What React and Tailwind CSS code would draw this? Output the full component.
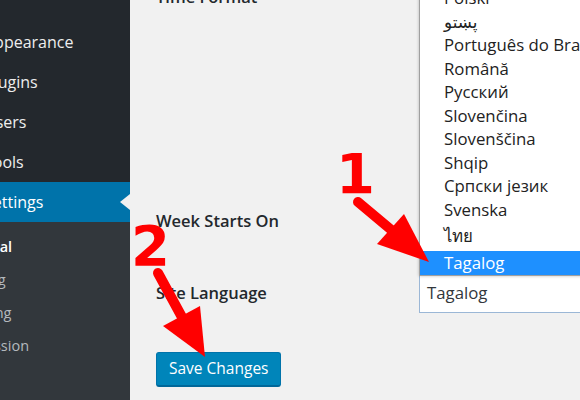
import React from 'react';

const menuItems = ['Appearance', 'Plugins', 'Users', 'Tools'];
const subItems = ['Writing', 'Reading', 'Discussion'];

const languages = [
  { name: 'Polski', h: 'h-[23.5px]' },
  { name: 'پښتو', h: 'h-[23.5px]' },
  { name: 'Português do Brasil', h: 'h-[23.5px]' },
  { name: 'Română', h: 'h-[23.5px]' },
  { name: 'Русский', h: 'h-[23.5px]' },
  { name: 'Slovenčina', h: 'h-[23.5px]' },
  { name: 'Slovenščina', h: 'h-[23.5px]' },
  { name: 'Shqip', h: 'h-[23.5px]' },
  { name: 'Српски језик', h: 'h-[23.5px]' },
  { name: 'Svenska', h: 'h-[23.5px]' },
  { name: 'ไทย', h: 'h-[30px]' },
];

const font = "font-['Open_Sans','Noto_Sans','DejaVu_Sans',sans-serif]";

const App = () => {
  return (
    <div className={`relative w-[580px] h-[400px] flex overflow-hidden ${font}`}>
      {/* Admin menu */}
      <aside className="w-[130px] shrink-0 bg-[#23282d] flex flex-col">
        <div className="h-[22px] shrink-0" />
        {menuItems.map((item) => (
          <div key={item} className="h-[40px] shrink-0 flex items-center overflow-hidden text-[16px] leading-[22px] pb-[1px] text-[#eeeeee] whitespace-nowrap">
            <span className="-ml-[16px]">{item}</span>
          </div>
        ))}
        <div className="relative h-[40px] shrink-0 flex items-center bg-[#0073aa] text-[16px] leading-[22px] pb-[1px] text-white whitespace-nowrap">
          <div className="w-full overflow-hidden">
            <span className="-ml-[16px]">Settings</span>
          </div>
          <span className="absolute right-0 top-[12px] w-0 h-0 border-y-[8px] border-y-transparent border-r-[10px] border-r-[#f1f1f1]" />
        </div>
        <div className="flex-1 bg-[#32373c] pt-[8px] overflow-hidden whitespace-nowrap text-[14.5px]">
          <div className="h-[33px] flex items-center font-semibold text-white">
            <span className="-ml-[43px]">General</span>
          </div>
          {subItems.map((item) => (
            <div key={item} className="h-[33px] flex items-center text-[#b4b9be]">
              <span className="-ml-[43px]">{item}</span>
            </div>
          ))}
        </div>
      </aside>

      {/* Settings form */}
      <main className="relative flex-1 bg-[#f1f1f1] pl-[26px] text-[16.5px] text-[#23282d]">
        <div className="-mt-[12px] h-[213px]">
          <p className="leading-[18px] font-semibold">Time Format</p>
        </div>
        <div className="h-[40px] flex items-center font-semibold">Week Starts On</div>
        <div className="mt-[32px] h-[40px] flex items-center">
          <span className="w-[263px] shrink-0 font-semibold">Site Language</span>
          <div className="h-[40px] w-[200px] shrink-0 flex items-center bg-white border border-[#9bb7d6] pl-[7px] text-[16.8px] text-[#32373c]">
            Tagalog
          </div>
        </div>
        <button className="mt-[39px] h-[35px] px-[12px] rounded-[3px] bg-[#0085ba] border border-[#0073aa] border-b-[#006799] border-b-2 text-[15.5px] text-white">
          Save Changes
        </button>

        {/* Open language dropdown */}
        <div className="absolute left-[289px] top-[-15px] w-[200px] bg-white border border-[#a0a0a0] shadow-[0_0_3px_rgba(0,0,0,0.25)] text-[16.8px] text-[#222222] whitespace-nowrap">
          {languages.map((lang) => (
            <div key={lang.name} className={`${lang.h} flex items-center pl-[24px]`}>
              {lang.name}
            </div>
          ))}
          <div className="h-[23.5px] flex items-center pl-[24px] bg-[#1e90ff] text-white">Tagalog</div>
        </div>
      </main>

      {/* Annotations */}
      <span className="absolute left-[336px] top-[146px] text-[56px] leading-none font-bold text-[#ff0000] font-['DejaVu_Sans',sans-serif]">1</span>
      <span className="absolute left-[131px] top-[218px] text-[56px] leading-none font-bold text-[#ff0000] font-['DejaVu_Sans',sans-serif]">2</span>
      <svg className="absolute inset-0 pointer-events-none" width="580" height="400" viewBox="0 0 580 400">
        <line x1="358" y1="202" x2="395" y2="233" stroke="#ff0000" strokeWidth="10" strokeLinecap="round" />
        <polygon points="377,244 404,214 429,262" fill="#ff0000" />
        <line x1="158" y1="273" x2="183" y2="319" stroke="#ff0000" strokeWidth="10" strokeLinecap="round" />
        <polygon points="163,326 200,306 205,357" fill="#ff0000" />
      </svg>
    </div>
  );
};

export default App;
